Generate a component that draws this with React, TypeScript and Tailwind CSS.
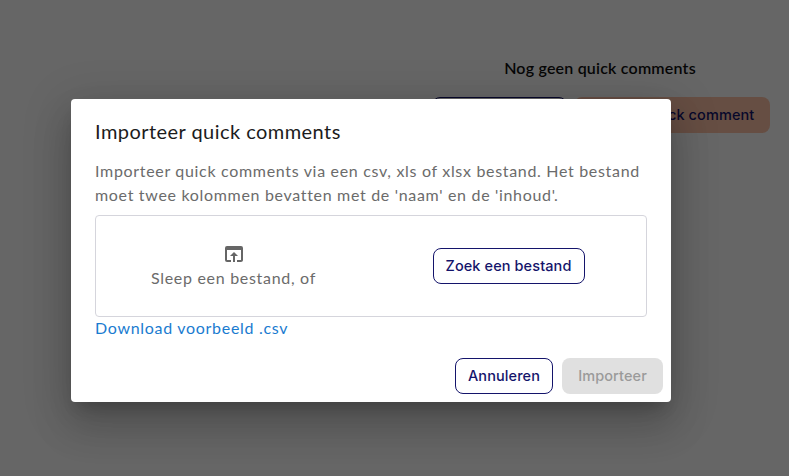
import { MdOpenInBrowser } from "react-icons/md";

const nunito = "font-['Lato','Open_Sans',sans-serif]";
const poppins = "font-['Inter','Noto_Sans',sans-serif]";

function Button({ children, className }: { children: React.ReactNode; className: string }) {
  return (
    <button className={`h-9 rounded-lg text-[14.5px] font-medium tracking-[0.1px] ${poppins} ${className}`}>
      {children}
    </button>
  );
}

export default function App() {
  return (
    <div className="relative h-[476px] w-[789px] overflow-hidden bg-white">
      {/* page behind the modal */}
      <div className="flex flex-col items-end pr-[19px] pt-[58px]">
        <p className={`w-[338px] pr-[2px] text-center text-[16px] leading-[19px] font-semibold tracking-[0.2px] text-[#111] ${nunito}`}>
          Nog geen quick comments
        </p>
        <div className="mt-[20px] flex gap-[7px]">
          <Button className="w-[135px] border border-[#14146b] bg-white text-[#14146b]">Importeer</Button>
          <Button className="w-[196px] bg-[#ffc4a8] text-[#14146b]">Nieuwe quick comment</Button>
        </div>
      </div>

      {/* overlay */}
      <div className="absolute inset-0 bg-black/60" />

      {/* modal */}
      <div className="absolute top-[99px] left-[71px] w-[600px] rounded-[4px] bg-white pt-[18px] pr-[8px] pb-[8px] pl-[24px] shadow-[0_11px_15px_-7px_rgba(0,0,0,0.2),0_24px_38px_3px_rgba(0,0,0,0.14),0_9px_46px_8px_rgba(0,0,0,0.12)]">
        <h2 className={`text-[20px] leading-[28px] font-normal tracking-[0.45px] text-[#1c1c1c] ${nunito}`}>
          Importeer quick comments
        </h2>
        <p className={`mt-[14px] w-[552px] text-[16px] leading-[24px] tracking-[0.68px] text-[#6b6b6b] ${nunito}`}>
          Importeer quick comments via een csv, xls of xlsx bestand. Het bestand moet twee kolommen bevatten met de 'naam' en de 'inhoud'.
        </p>
        <div className="mt-[8px] grid h-[102px] w-[552px] grid-cols-2 items-center rounded-[4px] border border-[#d5d5dc]">
          <div className="flex flex-col items-center">
            <MdOpenInBrowser className="mb-[1px] -mt-[1px] text-[#666]" size={24} />
            <span className={`text-[16px] leading-[22px] tracking-[0.7px] text-[#6b6b6b] ${nunito}`}>Sleep een bestand, of</span>
          </div>
          <div className="flex justify-center">
            <Button className="w-[152px] border border-[#14146b] bg-white text-[#14146b]">Zoek een bestand</Button>
          </div>
        </div>
        <a className={`block text-[16px] leading-[22px] tracking-[0.7px] text-[#1a7bd0] ${nunito}`}>Download voorbeeld .csv</a>
        <div className="mt-[19px] flex justify-end gap-[9px]">
          <Button className="w-[98px] border border-[#14146b] bg-white text-[#14146b]">Annuleren</Button>
          <Button className="w-[101px] bg-[#e0e0e0] text-[#9a9a9a]">Importeer</Button>
        </div>
      </div>
    </div>
  );
}
